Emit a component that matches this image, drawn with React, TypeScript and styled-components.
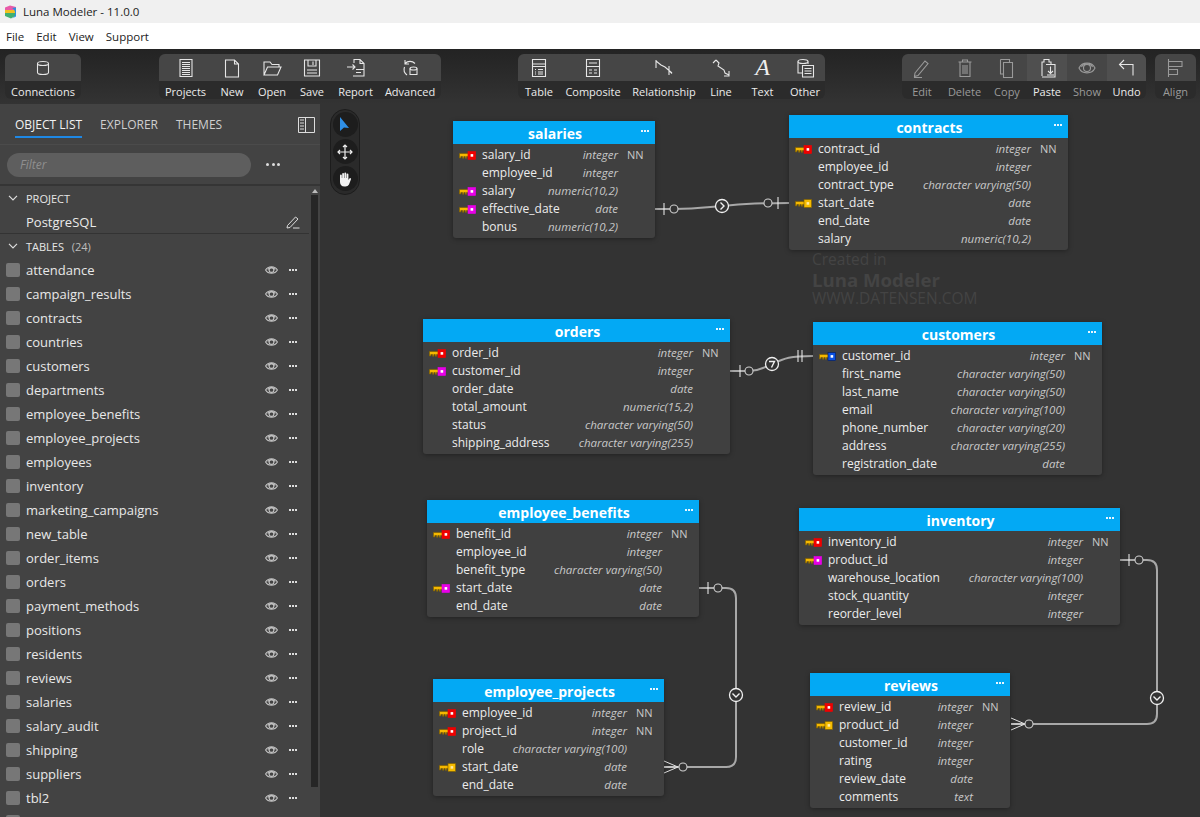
import React from "react";
import styled, { createGlobalStyle } from "styled-components";

const FONT = `"Open Sans", "Noto Sans", sans-serif`;

const GlobalStyle = createGlobalStyle`
  html, body {
    margin: 0;
    padding: 0;
    height: 100%;
    overflow: hidden;
    background: #333;
    font-family: ${FONT};
  }
  * { box-sizing: border-box; }
`;

const Page = styled.div`
  width: 1200px;
  height: 817px;
  display: flex;
  flex-direction: column;
  overflow: hidden;
`;

/* window chrome */
const TitleBar = styled.div`
  height: 23px;
  background: #f0f0f0;
  display: flex;
  align-items: center;
  gap: 6px;
  padding-left: 4px;
  font-size: 11.5px;
  color: #222;
`;

const MenuBar = styled.div`
  height: 26px;
  background: #fff;
  display: flex;
  align-items: center;
  gap: 12px;
  padding-left: 6px;
  font-size: 11.5px;
  color: #222;
`;

/* toolbar */
const Toolbar = styled.div`
  height: 55px;
  background: linear-gradient(#232323, #333);
  display: flex;
  gap: 77px;
  align-items: flex-start;
  padding: 5px 0 0 5px;
`;

const ToolCluster = styled.div`
  display: flex;
  gap: 9px;
  &:first-child {
    margin-right: 1px;
  }
`;

const ToolGroup = styled.div`
  display: flex;
  height: 45px;
  border-radius: 6px;
  overflow: hidden;
  background: linear-gradient(#464646 0, #464646 27px, #2b2b2b 27px);
`;

const Tool = styled.div<{ $w: number }>`
  width: ${(p) => p.$w}px;
  display: flex;
  flex-direction: column;
  align-items: center;
`;

const ToolIcon = styled.div<{ $lit?: boolean; $off?: boolean }>`
  width: 100%;
  height: 27px;
  display: flex;
  align-items: center;
  justify-content: center;
  color: ${(p) => (p.$off ? "#9a9a9a" : "#e6e6e6")};
  background: ${(p) => (p.$lit ? "#4f4f4f" : "transparent")};
`;

const ToolLabel = styled.div<{ $off?: boolean }>`
  height: 18px;
  line-height: 22px;
  font-size: 11px;
  white-space: nowrap;
  color: ${(p) => (p.$off ? "#9a9a9a" : "#ececec")};
`;

const TextGlyph = styled.span`
  font-family: "Liberation Serif", serif;
  font-style: italic;
  font-size: 24px;
  line-height: 27px;
  color: #eee;
`;

/* main */
const Main = styled.div`
  flex: 1;
  display: flex;
  min-height: 0;
`;

const Sidebar = styled.aside`
  width: 320px;
  flex: none;
  background: #434343;
  display: flex;
  flex-direction: column;
  overflow: hidden;
`;

const TabBar = styled.div`
  height: 41px;
  flex: none;
  display: flex;
  align-items: flex-start;
  gap: 18px;
  padding: 0 15px;
  border-bottom: 1px solid #4b4b4b;
`;

const Tab = styled.div<{ $active?: boolean }>`
  height: 34px;
  line-height: 42px;
  font-size: 12px;
  white-space: nowrap;
  color: ${(p) => (p.$active ? "#f2f2f2" : "#cfcfcf")};
  border-bottom: 2px solid ${(p) => (p.$active ? "#1e88e5" : "transparent")};
`;

const PanelToggle = styled.div`
  margin-left: auto;
  margin-right: -10px;
  padding-top: 13px;
  color: #ddd;
  display: flex;
`;

const FilterRow = styled.div`
  height: 41px;
  flex: none;
  display: flex;
  align-items: center;
  padding: 0 0 0 7px;
  gap: 15px;
  border-bottom: 2px solid #353535;
`;

const FilterInput = styled.div`
  width: 244px;
  height: 24px;
  border-radius: 12px;
  background: #5e5e5e;
  color: #8f8f8f;
  font-style: italic;
  font-size: 12px;
  line-height: 24px;
  padding-left: 13px;
`;

const BigDots = styled.div`
  display: flex;
  gap: 2.5px;
  & > i {
    width: 3px;
    height: 3px;
    border-radius: 50%;
    background: #ddd;
  }
`;

const ListWrap = styled.div`
  flex: 1;
  min-height: 0;
  display: flex;
`;

const List = styled.div`
  width: 309px;
  flex: none;
  overflow: hidden;
`;

const Scrollbar = styled.div`
  width: 11px;
  flex: none;
  display: flex;
  flex-direction: column;
  align-items: center;
`;

const ScrollArrow = styled.div`
  margin-top: 3px;
  width: 0;
  height: 0;
  border-left: 3px solid transparent;
  border-right: 3px solid transparent;
  border-bottom: 4px solid #bbb;
`;

const ScrollThumb = styled.div`
  margin-top: 2px;
  width: 7px;
  height: 592px;
  background: #262626;
`;

const SectionHead = styled.div`
  height: 24px;
  display: flex;
  align-items: center;
  padding-left: 8px;
  gap: 8px;
  font-size: 11px;
  color: #e6e6e6;
`;

const Count = styled.span`
  color: #bdbdbd;
  margin-left: 2px;
`;

const ProjectRow = styled.div`
  height: 24px;
  display: flex;
  align-items: center;
  justify-content: space-between;
  padding: 0 9px 0 26px;
  font-size: 13px;
  color: #eaeaea;
  border-bottom: 1px solid #333;
`;

const TableRow = styled.div`
  height: 24px;
  display: flex;
  align-items: center;
  padding: 0 12px 0 6px;
  font-size: 13px;
  color: #e8e8e8;
`;

const Swatch = styled.div`
  width: 14px;
  height: 14px;
  border-radius: 2px;
  background: #777;
  margin-right: 6px;
  flex: none;
`;

const TableName = styled.div`
  flex: 1;
`;

const RowIcons = styled.div`
  display: flex;
  align-items: center;
  gap: 11px;
`;

const SmallDots = styled.div<{ $color?: string }>`
  display: flex;
  gap: 1px;
  & > i {
    width: 2px;
    height: 2px;
    background: ${(p) => p.$color ?? "#ddd"};
  }
`;

/* diagram */
const Canvas = styled.main`
  flex: 1;
  position: relative;
  background: #333;
  overflow: hidden;
`;

const Palette = styled.div`
  position: absolute;
  left: 10px;
  top: 5px;
  width: 30px;
  height: 86px;
  border-radius: 15px;
  background: #2a2a2a;
  border: 1px solid #1c1c1c;
  display: flex;
  flex-direction: column;
  align-items: center;
  gap: 2px;
  padding-top: 2px;
`;

const PaletteBtn = styled.div`
  width: 25px;
  height: 25px;
  border-radius: 50%;
  background: #1d1d1d;
  display: flex;
  align-items: center;
  justify-content: center;
  color: #eee;
`;

const Wires = styled.svg`
  position: absolute;
  left: 0;
  top: 0;
`;

const Watermark = styled.div`
  position: absolute;
  left: 492px;
  top: 146px;
  color: #444;
  font-size: 15.5px;
  line-height: 19.5px;
`;

const WatermarkBig = styled.div`
  font-weight: 700;
  font-size: 18.6px;
`;

const EntityBox = styled.div<{ $x: number; $y: number; $w: number }>`
  position: absolute;
  left: ${(p) => p.$x - 320}px;
  top: ${(p) => p.$y - 104}px;
  width: ${(p) => p.$w}px;
  background: #404040;
  border-radius: 0 0 3px 3px;
  box-shadow: 0 1px 5px rgba(0, 0, 0, 0.35);
  padding-bottom: 2px;
`;

const EntityHead = styled.div`
  height: 23px;
  background: #03a9f4;
  color: #fff;
  font-weight: 700;
  font-size: 14px;
  line-height: 26px;
  text-align: center;
  position: relative;
  margin-bottom: 2px;
  padding-left: 2px;
`;

const EntityMenu = styled.div`
  position: absolute;
  right: 6px;
  top: 9px;
`;

const Column = styled.div`
  height: 18px;
  display: flex;
  align-items: center;
  font-size: 12px;
  color: #ececec;
`;

const KeySlot = styled.div`
  width: 29px;
  flex: none;
  padding-left: 6px;
  display: flex;
  align-items: center;
`;

const ColName = styled.div`
  flex: 1;
  white-space: nowrap;
  margin-top: -1px;
`;

const ColType = styled.div`
  font-style: italic;
  font-size: 11.5px;
  color: #c8c8c8;
  white-space: nowrap;
  margin-top: -2px;
`;

const ColNull = styled.div`
  width: 37px;
  flex: none;
  padding-left: 9px;
  font-size: 11px;
  color: #c8c8c8;
  margin-top: -2px;
`;

/* icons */
const Svg: React.FC<{ children: React.ReactNode; w?: number; h?: number }> = ({ children, w = 22, h = 22 }) => (
  <svg width={w} height={h} viewBox={`0 0 ${w} ${h}`} fill="none" stroke="currentColor" strokeWidth="1.1">
    {children}
  </svg>
);

const icons: Record<string, React.ReactNode> = {
  connections: (
    <Svg>
      <ellipse cx="11" cy="6.500" rx="5.500" ry="2" />
      <path d="M5.500 6.500v9c0 1.200 2.500 2 5.500 2s5.500-.8 5.500-2v-9" />
    </Svg>
  ),
  projects: (
    <Svg>
      <path d="M5 2.500h12v17H5zM7 5.500h8M7 7.500h8M7 9.500h8M7 11.500h8M7 13.500h8M7 15.500h8M7 17.500h8" />
    </Svg>
  ),
  new: (
    <Svg>
      <path d="M4.500 3h9l4 4v13h-13zM13.500 3v4h4" />
    </Svg>
  ),
  open: (
    <Svg>
      <path d="M3 18V5h6l2 2.500h7V10M3 18l3.500-8H20l-3.500 8z" />
    </Svg>
  ),
  save: (
    <Svg>
      <path d="M3.500 3h15v16h-15zM7 3v6h8V3M12 4.500V8M6 13h10M6 16h10" />
    </Svg>
  ),
  report: (
    <Svg>
      <path d="M9 6V2.500h6l4 4V19H8M2 10h8M7.500 7.500 10 10l-2.500 2.500M15 2.500v4h4M11 12.500h8M11 15.500h5" />
    </Svg>
  ),
  advanced: (
    <Svg>
      <path d="M6 6.500a7 7 0 0 1 10 0M6 3v4h4M5.500 10a7 7 0 0 0 2.500 8" />
      <ellipse cx="14.500" cy="11.500" rx="3.500" ry="1.500" />
      <path d="M11 11.500v6h7v-6" />
    </Svg>
  ),
  table: (
    <Svg>
      <path d="M4.500 2.500h13v17h-13zM4.500 7h13M4.500 9.500h13M7 12.500h1M10 12.500h5M7 15h1M10 15h5M7 17h1M10 17h5" />
    </Svg>
  ),
  composite: (
    <Svg>
      <path d="M4.500 2.500h13v17h-13zM7 6h8M4.500 9.500h13M7 13h3M12 13h3M7 16h3M12 16h3" />
    </Svg>
  ),
  relationship: (
    <Svg>
      <path d="M3 3v8M3 4l5 4 4 2 7 6M16 9v9M16 13.500l3 3" />
    </Svg>
  ),
  line: (
    <Svg>
      <path d="M6 3 3 6M6 3l3 3-1 3 6 4 1 3 4 2M19 14v5h-5" />
    </Svg>
  ),
  other: (
    <Svg>
      <ellipse cx="9" cy="4.500" rx="5" ry="2" />
      <path d="M4 4.500V16h4M14 4.500V7M8.500 8.500h11V20h-11zM10.500 11.500h7M10.500 14h7M10.500 16.500h7" />
    </Svg>
  ),
  edit: (
    <Svg>
      <path d="m4 16 10-12 3 2.500L7 18.500l-3.500 1zM3 20.500h8" />
    </Svg>
  ),
  del: (
    <Svg>
      <path d="M4.500 5h13M8.500 5V3h5v2M6 5v14.500h10V5M9 8v9M11 8v9M13 8v9" />
    </Svg>
  ),
  copy: (
    <Svg>
      <path d="M4.500 2.500h9v3M4.500 2.500V17h3M7.500 5.500h9v15h-9z" />
    </Svg>
  ),
  paste: (
    <Svg>
      <path d="M6 19V5h2V2.500h5V5h2v2M10 7.500h9V20H6M14.500 9.500v7M12 14l2.500 2.500L17 14M11 18h7" />
    </Svg>
  ),
  show: (
    <Svg>
      <path d="M3 11c3-6.500 13-6.500 16 0-3 6.500-13 6.500-16 0z" />
      <circle cx="11" cy="11" r="3.500" />
      <path d="M5.500 10c2-4 9-4 11 0" />
    </Svg>
  ),
  undo: (
    <Svg>
      <path d="M8 3 3.500 7.500 8 12M4 7.500h13v11" />
    </Svg>
  ),
  align: (
    <Svg>
      <path d="M3.500 2v18M3.500 4.500H17v5H3.500M3.500 12.500h9v5h-9" />
    </Svg>
  ),
};

const Eye = () => (
  <svg width="13" height="10" viewBox="0 0 13 10" fill="none" stroke="#c4c4c4" strokeWidth="1.100">
    <path d="M.6 5C3 .6 10 .6 12.400 5 10 9.400 3 9.400.6 5z" />
    <circle cx="6.500" cy="5" r="2.400" />
    <path d="M2.800 4.500C4 2.200 9 2.200 10.200 4.500" />
  </svg>
);

const Dots3 = ({ color }: { color?: string }) => (
  <SmallDots $color={color}>
    <i />
    <i />
    <i />
  </SmallDots>
);

const Chevron = () => (
  <svg width="10" height="6" viewBox="0 0 10 6" fill="none" stroke="#ddd" strokeWidth="1.200">
    <path d="m1 .8 4 4 4-4" />
  </svg>
);

const KEY_COLORS: Record<string, [string, string, string]> = {
  r: ["#f00000", "#fff", "#f00000"],
  m: ["#e800e8", "#fff", "#e800e8"],
  y: ["#f5bb00", "#ffe9a0", "#7a5c00"],
  b: ["#0a50e0", "#fff", "#001a60"],
};

const KeyIcon = ({ kind }: { kind: string }) => {
  const [fill, hole, edge] = KEY_COLORS[kind];
  return (
    <svg width="17" height="9" viewBox="0 0 17 9">
      <path d="M.4 2.400h9v3.200H7.500v1.600H6.300V5.600H4.800v1.600H3.600V5.600H1.800V7H.4z" fill="#f5b800" stroke="#7a5c00" strokeWidth=".7" />
      <rect x="9" y=".5" width="7.600" height="8" fill={fill} stroke={edge} strokeWidth=".6" />
      <rect x="11.600" y="3.100" width="2.600" height="2.600" fill={hole} />
    </svg>
  );
};

const Logo = () => (
  <svg width="13" height="14" viewBox="0 0 13 14">
    <path d="M1 2.500 6 .5l6 1.500v3H1z" fill="#e85aa8" />
    <path d="M1 5h11v3H1z" fill="#f0c020" />
    <path d="M1 8h11v2.500L7 13.500 1 11z" fill="#40b070" />
    <path d="M8 3a6 6 0 0 1 0 10.500l4-2V2.500z" fill="#2a90e0" />
  </svg>
);

/* data */
type Col = [string, string, string?, string?];

const ENTITIES: { name: string; x: number; y: number; w: number; cols: Col[] }[] = [
  {
    name: "salaries", x: 453, y: 121, w: 202,
    cols: [
      ["salary_id", "integer", "NN", "r"],
      ["employee_id", "integer"],
      ["salary", "numeric(10,2)", "", "m"],
      ["effective_date", "date", "", "m"],
      ["bonus", "numeric(10,2)"],
    ],
  },
  {
    name: "contracts", x: 789, y: 115, w: 279,
    cols: [
      ["contract_id", "integer", "NN", "r"],
      ["employee_id", "integer"],
      ["contract_type", "character varying(50)"],
      ["start_date", "date", "", "y"],
      ["end_date", "date"],
      ["salary", "numeric(10,2)"],
    ],
  },
  {
    name: "orders", x: 423, y: 319, w: 307,
    cols: [
      ["order_id", "integer", "NN", "r"],
      ["customer_id", "integer", "", "m"],
      ["order_date", "date"],
      ["total_amount", "numeric(15,2)"],
      ["status", "character varying(50)"],
      ["shipping_address", "character varying(255)"],
    ],
  },
  {
    name: "customers", x: 813, y: 322, w: 289,
    cols: [
      ["customer_id", "integer", "NN", "b"],
      ["first_name", "character varying(50)"],
      ["last_name", "character varying(50)"],
      ["email", "character varying(100)"],
      ["phone_number", "character varying(20)"],
      ["address", "character varying(255)"],
      ["registration_date", "date"],
    ],
  },
  {
    name: "employee_benefits", x: 427, y: 500, w: 272,
    cols: [
      ["benefit_id", "integer", "NN", "r"],
      ["employee_id", "integer"],
      ["benefit_type", "character varying(50)"],
      ["start_date", "date", "", "m"],
      ["end_date", "date"],
    ],
  },
  {
    name: "inventory", x: 799, y: 508, w: 321,
    cols: [
      ["inventory_id", "integer", "NN", "r"],
      ["product_id", "integer", "", "m"],
      ["warehouse_location", "character varying(100)"],
      ["stock_quantity", "integer"],
      ["reorder_level", "integer"],
    ],
  },
  {
    name: "employee_projects", x: 433, y: 679, w: 231,
    cols: [
      ["employee_id", "integer", "NN", "r"],
      ["project_id", "integer", "NN", "r"],
      ["role", "character varying(100)"],
      ["start_date", "date", "", "y"],
      ["end_date", "date"],
    ],
  },
  {
    name: "reviews", x: 810, y: 673, w: 200,
    cols: [
      ["review_id", "integer", "NN", "r"],
      ["product_id", "integer", "", "y"],
      ["customer_id", "integer"],
      ["rating", "integer"],
      ["review_date", "date"],
      ["comments", "text"],
    ],
  },
];

// the 24th row is below the fold, only the top of its swatch shows
const TABLES = [
  "attendance", "campaign_results", "contracts", "countries", "customers", "departments",
  "employee_benefits", "employee_projects", "employees", "inventory", "marketing_campaigns",
  "new_table", "order_items", "orders", "payment_methods", "positions", "residents", "reviews",
  "salaries", "salary_audit", "shipping", "suppliers", "tbl2",
];

type ToolT = { label: string; icon: string; w: number; lit?: boolean; off?: boolean };

const GROUPS: ToolT[][][] = [
  [[{ label: "Connections", icon: "connections", w: 76 }]],
  [
    [
      { label: "Projects", icon: "projects", w: 53 },
      { label: "New", icon: "new", w: 40 },
      { label: "Open", icon: "open", w: 40 },
      { label: "Save", icon: "save", w: 40 },
      { label: "Report", icon: "report", w: 47 },
      { label: "Advanced", icon: "advanced", w: 62 },
    ],
  ],
  [
    [
      { label: "Table", icon: "table", w: 42 },
      { label: "Composite", icon: "composite", w: 66 },
      { label: "Relationship", icon: "relationship", w: 76 },
      { label: "Line", icon: "line", w: 38 },
      { label: "Text", icon: "text", w: 45 },
      { label: "Other", icon: "other", w: 40 },
    ],
  ],
  [
    [
      { label: "Edit", icon: "edit", w: 40, off: true },
      { label: "Delete", icon: "del", w: 45, off: true },
      { label: "Copy", icon: "copy", w: 40, off: true },
      { label: "Paste", icon: "paste", w: 40, lit: true },
      { label: "Show", icon: "show", w: 40, off: true },
      { label: "Undo", icon: "undo", w: 39, lit: true },
    ],
    [{ label: "Align", icon: "align", w: 41, off: true }],
  ],
];

const Knob = ({ x, y, d }: { x: number; y: number; d: string }) => (
  <g>
    <circle cx={x} cy={y} r="6.500" fill="#333" stroke="#f0f0f0" strokeWidth="1.300" />
    <path d={d} transform={`translate(${x} ${y})`} fill="none" stroke="#f0f0f0" strokeWidth="1.400" />
  </g>
);

const Ring = ({ x, y }: { x: number; y: number }) => (
  <circle cx={x} cy={y} r="4" fill="#333" stroke="#cfcfcf" strokeWidth="1.100" />
);

const Tick = ({ x, y }: { x: number; y: number }) => (
  <path d={`M${x} ${y - 6}v12`} stroke="#f4f4f4" strokeWidth="1" fill="none" />
);

const Crow = ({ x, y }: { x: number; y: number }) => (
  <path d={`M${x} ${y - 6}L${x + 14} ${y}L${x} ${y + 6}M${x} ${y}h14`} stroke="#e0e0e0" strokeWidth="1" fill="none" />
);

const Diagram = () => (
  <Wires width="880" height="713" viewBox="320 104 880 713">
    <g fill="none" stroke="#a8a8a8" strokeWidth="2">
      <path d="M655 209H674C695 209 700 208 722 206C745 204 750 203 789 203" />
      <path d="M730 371H749C760 371 762 368 772 364C785 358 790 356 813 356" />
      <path d="M699 588H726Q736 588 736 598V757Q736 767 726 767H664" />
      <path d="M1120 560H1147Q1157 560 1157 570V714Q1157 724 1147 724H1011" />
    </g>
    <Tick x={664} y={209} />
    <Ring x={674} y={209} />
    <Knob x={722} y={206} d="M-1.500 -3.500 2 0 -1.500 3.500" />
    <Ring x={768} y={203} />
    <Tick x={778} y={203} />

    <Tick x={740} y={371} />
    <Ring x={749} y={371} />
    <Knob x={772} y={364} d="M-3 -2.500H2.500L-.5 3.500" />
    <Tick x={798} y={356} />
    <Tick x={802} y={356} />

    <Tick x={708} y={588} />
    <Ring x={718} y={588} />
    <Knob x={736} y={695} d="M-3.500 -1.500 0 2 3.500 -1.500" />
    <Crow x={664} y={767} />
    <Ring x={683} y={767} />

    <Tick x={1129} y={560} />
    <Ring x={1139} y={560} />
    <Knob x={1157} y={698} d="M-3.500 -1.500 0 2 3.500 -1.500" />
    <Crow x={1011} y={724} />
    <Ring x={1029} y={724} />
  </Wires>
);

const App: React.FC = () => (
  <>
    <GlobalStyle />
    <Page>
      <TitleBar>
        <Logo />
        Luna Modeler - 11.0.0
      </TitleBar>
      <MenuBar>
        <span>File</span>
        <span>Edit</span>
        <span>View</span>
        <span>Support</span>
      </MenuBar>

      <Toolbar>
        {GROUPS.map((cluster, i) => (
          <ToolCluster key={i}>
            {cluster.map((group, j) => (
              <ToolGroup key={j}>
                {group.map((t) => (
                  <Tool key={t.label} $w={t.w}>
                    <ToolIcon $lit={t.lit} $off={t.off}>
                      {t.icon === "text" ? <TextGlyph>A</TextGlyph> : icons[t.icon]}
                    </ToolIcon>
                    <ToolLabel $off={t.off}>{t.label}</ToolLabel>
                  </Tool>
                ))}
              </ToolGroup>
            ))}
          </ToolCluster>
        ))}
      </Toolbar>

      <Main>
        <Sidebar>
          <TabBar>
            <Tab $active>OBJECT LIST</Tab>
            <Tab>EXPLORER</Tab>
            <Tab>THEMES</Tab>
            <PanelToggle>
              <svg width="17" height="16" viewBox="0 0 17 16" fill="none" stroke="currentColor" strokeWidth="1">
                <path d="M.5.500h16v15H.5zM7.500.500v15M2 3h4M2 6h4M2 9h4M2 12h4" />
              </svg>
            </PanelToggle>
          </TabBar>
          <FilterRow>
            <FilterInput>Filter</FilterInput>
            <BigDots>
              <i />
              <i />
              <i />
            </BigDots>
          </FilterRow>
          <ListWrap>
            <List>
              <SectionHead>
                <Chevron />
                PROJECT
              </SectionHead>
              <ProjectRow>
                PostgreSQL
                <svg width="14" height="14" viewBox="0 0 14 14" fill="none" stroke="#ddd" strokeWidth="1">
                  <path d="M1.500 10.500 9.500 2l2.500 2-8 8.500-3 .5zM7 13h6.500" />
                </svg>
              </ProjectRow>
              <SectionHead>
                <Chevron />
                <span>
                  TABLES <Count>&nbsp;(24)</Count>
                </span>
              </SectionHead>
              {TABLES.map((t) => (
                <TableRow key={t}>
                  <Swatch />
                  <TableName>{t}</TableName>
                  <RowIcons>
                    <Eye />
                    <Dots3 />
                  </RowIcons>
                </TableRow>
              ))}
              <TableRow>
                <Swatch />
              </TableRow>
            </List>
            <Scrollbar>
              <ScrollArrow />
              <ScrollThumb />
            </Scrollbar>
          </ListWrap>
        </Sidebar>

        <Canvas>
          <Palette>
            <PaletteBtn>
              <svg width="14" height="18" viewBox="0 0 14 18">
                <path d="M2 1v14l4-3.500 5 .5z" fill="#2f8fe6" />
              </svg>
            </PaletteBtn>
            <PaletteBtn>
              <svg width="16" height="16" viewBox="0 0 16 16" fill="none" stroke="#eee" strokeWidth="1.200">
                <path d="M8 1v14M1 8h14M6 3l2-2 2 2M6 13l2 2 2-2M3 6 1 8l2 2M13 6l2 2-2 2" />
              </svg>
            </PaletteBtn>
            <PaletteBtn>
              <svg width="16" height="16" viewBox="0 0 16 16">
                <path
                  d="M3 8V4.500a.9.900 0 0 1 1.800 0V7h.4V2.800a.9.900 0 0 1 1.800 0V7h.4V2.300a.9.900 0 0 1 1.800 0V7h.4V3.500a.9.900 0 0 1 1.800 0V9l1-1.500a.9.900 0 0 1 1.500 1L12 13.500c-.8 1.300-2 2-3.500 2h-1C4.500 15.500 3 13.500 3 11z"
                  fill="#f2f2f2"
                />
              </svg>
            </PaletteBtn>
          </Palette>

          <Watermark>
            Created in
            <WatermarkBig>Luna Modeler</WatermarkBig>
            WWW.DATENSEN.COM
          </Watermark>

          <Diagram />

          {ENTITIES.map((e) => (
            <EntityBox key={e.name} $x={e.x} $y={e.y} $w={e.w}>
              <EntityHead>
                {e.name}
                <EntityMenu>
                  <Dots3 color="#e8f6ff" />
                </EntityMenu>
              </EntityHead>
              {e.cols.map(([name, type, nn, key]) => (
                <Column key={name}>
                  <KeySlot>{key && <KeyIcon kind={key} />}</KeySlot>
                  <ColName>{name}</ColName>
                  <ColType>{type}</ColType>
                  <ColNull>{nn}</ColNull>
                </Column>
              ))}
            </EntityBox>
          ))}
        </Canvas>
      </Main>
    </Page>
  </>
);

export default App;
